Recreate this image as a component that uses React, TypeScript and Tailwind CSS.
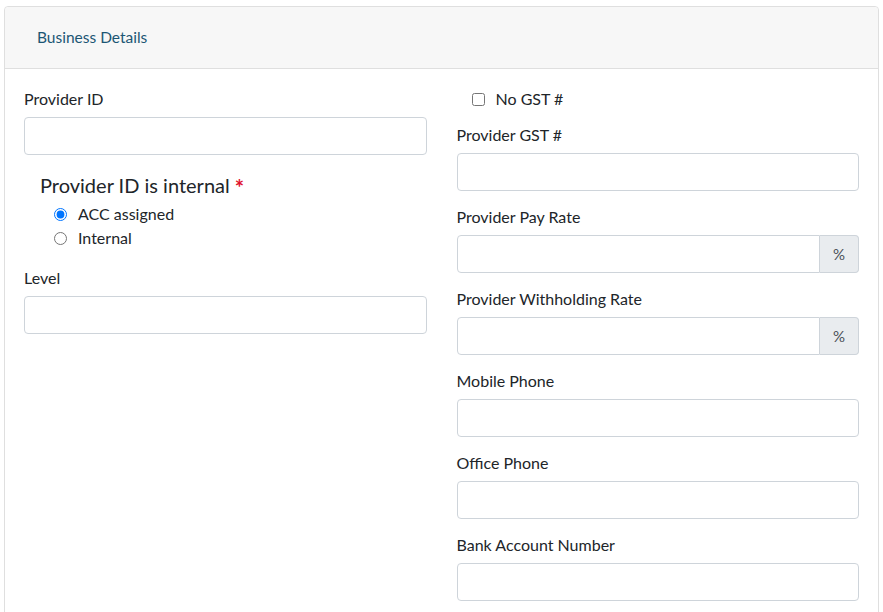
import React from "react";

const font = { fontFamily: "Lato, 'Noto Sans', sans-serif" };

function Field({ label, addon }: { label: string; addon?: boolean }) {
  return (
    <div className="mb-4">
      <label className="block text-[16px] leading-[20px] mb-2 text-[#212529]">{label}</label>
      {addon ? (
        <div className="flex">
          <input className="h-[38px] flex-1 min-w-0 border border-[#ced4da] rounded-l-[4px] bg-white outline-none px-3" />
          <span className="h-[38px] w-[39px] flex items-center justify-center border border-l-0 border-[#ced4da] rounded-r-[4px] bg-[#e9ecef] text-[15px] text-[#495057]">%</span>
        </div>
      ) : (
        <input className="block w-full h-[38px] border border-[#ced4da] rounded-[4px] bg-white outline-none px-3" />
      )}
    </div>
  );
}

export default function App() {
  return (
    <div className="w-[883px] h-[612px] overflow-hidden bg-white pt-[6px] px-[4px]" style={font}>
      <div className="border border-[#dfdfdf] rounded-t-[4px] min-h-[700px]">
        <div className="h-[62px] bg-[#f7f7f7] border-b border-[#dfdfdf] flex items-center pl-[32px] rounded-t-[4px]">
          <span className="text-[15.5px] text-[#1c5674]">Business Details</span>
        </div>
        <div className="px-[19px] pt-[20px] grid grid-cols-2 gap-x-[30px] text-[#212529]">
          <div>
            <Field label="Provider ID" />
            <fieldset className="pl-[16px] mb-[18px]">
              <div className="text-[20px] leading-[28px] mb-[3px]">
                Provider ID is internal{" "}
                <span className="inline-block translate-y-[3px] text-[#e0112b] text-[22px] font-bold">*</span>
              </div>
              <label className="flex items-center h-[24px] pl-[14px] text-[16px]">
                <input type="radio" name="pid" defaultChecked className="m-0 w-[13px] h-[13px] accent-[#0075ff]" />
                <span className="ml-[11px]">ACC assigned</span>
              </label>
              <label className="flex items-center h-[24px] pl-[14px] text-[16px]">
                <input type="radio" name="pid" className="m-0 w-[13px] h-[13px]" />
                <span className="ml-[11px]">Internal</span>
              </label>
            </fieldset>
            <Field label="Level" />
          </div>
          <div>
            <label className="flex items-center h-[20px] mb-4 pl-[15px] text-[16px]">
              <input type="checkbox" className="m-0 w-[13px] h-[13px]" />
              <span className="ml-[11px]">No GST #</span>
            </label>
            <Field label="Provider GST #" />
            <Field label="Provider Pay Rate" addon />
            <Field label="Provider Withholding Rate" addon />
            <Field label="Mobile Phone" />
            <Field label="Office Phone" />
            <Field label="Bank Account Number" />
          </div>
        </div>
      </div>
    </div>
  );
}
